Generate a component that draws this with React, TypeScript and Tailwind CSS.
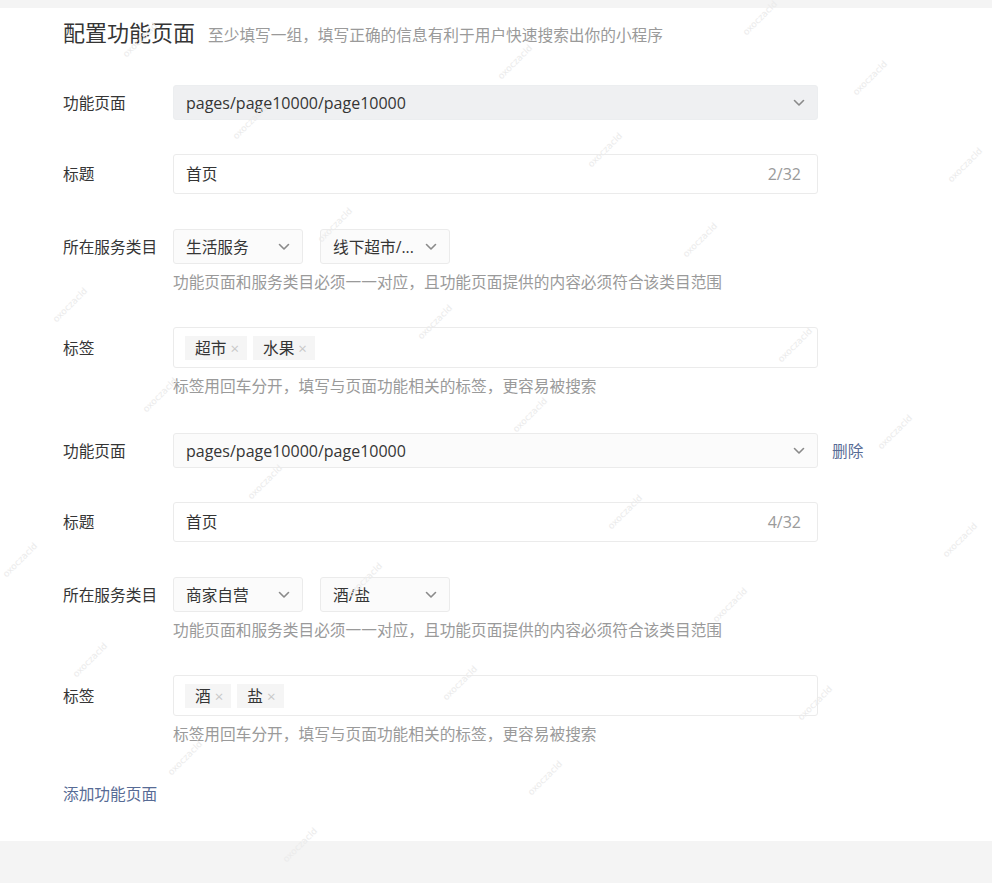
import React from "react";

const FONT = { fontFamily: '"Open Sans", "Noto Sans CJK SC", sans-serif' };

function Chevron() {
  return (
    <svg width="12" height="8" viewBox="0 0 12 8" className="shrink-0">
      <polyline points="1.5,1.5 6,6 10.5,1.5" fill="none" stroke="#8a8a8a" strokeWidth="1.6" strokeLinecap="round" strokeLinejoin="round" />
    </svg>
  );
}

function Label({ children }: { children: React.ReactNode }) {
  return <div className="w-[110px] shrink-0 text-[15.7px] leading-[20px] text-[#353535]">{children}</div>;
}

function PageSelect({ grey, del }: { grey?: boolean; del?: boolean }) {
  return (
    <div className="flex items-center">
      <Label>功能页面</Label>
      <div
        className={
          grey
            ? "flex h-[35px] w-[645px] items-center justify-between rounded-[3px] border border-[#eceef0] bg-[#eff0f2] pl-[12px] pr-[12px]"
            : "flex h-[35px] w-[645px] items-center justify-between rounded-[3px] border border-[#ebebeb] bg-[#fbfbfb] pl-[12px] pr-[12px]"
        }
      >
        <span className="text-[16px] leading-[20px] text-[#353535]">pages/page10000/page10000</span>
        <Chevron />
      </div>
      {del && <span className="ml-[14px] text-[15.7px] leading-[20px] text-[#576b95]">删除</span>}
    </div>
  );
}

function TitleInput({ count }: { count: string }) {
  return (
    <div className="flex items-center">
      <Label>标题</Label>
      <div className="flex h-[40px] w-[645px] items-center justify-between rounded-[3px] border border-[#ebebeb] bg-white pl-[12px] pr-[16px]">
        <span className="text-[15.7px] leading-[20px] text-[#353535]">首页</span>
        <span className="text-[16px] leading-[20px] text-[#9a9a9a]">{count}</span>
      </div>
    </div>
  );
}

function SmallSelect({ text }: { text: string }) {
  return (
    <div className="flex h-[35px] w-[130px] items-center justify-between rounded-[3px] border border-[#ebebeb] bg-[#fbfbfb] pl-[12px] pr-[12px]">
      <span className="text-[15.7px] leading-[20px] text-[#353535]">{text}</span>
      <Chevron />
    </div>
  );
}

function Category({ a, b }: { a: string; b: string }) {
  return (
    <div>
      <div className="flex items-center">
        <Label>所在服务类目</Label>
        <div className="flex gap-[17px]">
          <SmallSelect text={a} />
          <SmallSelect text={b} />
        </div>
      </div>
      <div className="mt-[8px] pl-[110px] text-[15.7px] leading-[20px] text-[#9a9a9a]">
        功能页面和服务类目必须一一对应，且功能页面提供的内容必须符合该类目范围
      </div>
    </div>
  );
}

function Tags({ tags }: { tags: string[] }) {
  return (
    <div>
      <div className="flex items-center">
        <Label>标签</Label>
        <div className="flex h-[41px] w-[645px] items-center gap-[6px] rounded-[3px] border border-[#ebebeb] bg-white pl-[11px]">
          {tags.map((t) => (
            <span key={t} className="flex h-[24px] items-center gap-[4px] bg-[#f5f5f5] pl-[10px] pr-[8px]">
              <span className="text-[15.7px] leading-[20px] text-[#353535]">{t}</span>
              <span className="text-[15px] leading-[16px] text-[#c8c8c8]">×</span>
            </span>
          ))}
        </div>
      </div>
      <div className="mt-[8px] pl-[110px] text-[15.7px] leading-[20px] text-[#9a9a9a]">
        标签用回车分开，填写与页面功能相关的标签，更容易被搜索
      </div>
    </div>
  );
}

const marks: [number, number][] = [
  [140, 40], [515, 62], [870, 78], [250, 122], [605, 150], [965, 165],
  [335, 225], [700, 240], [70, 305], [435, 322], [795, 345], [160, 395],
  [530, 415], [895, 432], [265, 482], [625, 512], [960, 540], [20, 560],
  [365, 580], [730, 605], [90, 660], [460, 683], [815, 703], [185, 758],
  [545, 778], [300, 845], [760, 18],
];

export default function App() {
  return (
    <div className="relative min-h-[883px] overflow-hidden bg-[#f4f4f4]" style={FONT}>
      <div className="h-[8px]" />
      <div className="bg-white pb-[37px] pl-[63px] pt-[8px]">
        <div className="flex items-baseline">
          <span className="text-[22px] leading-[32px] text-[#353535]">配置功能页面</span>
          <span className="ml-[13px] text-[15.7px] leading-[20px] text-[#9a9a9a]">
            至少填写一组，填写正确的信息有利于用户快速搜索出你的小程序
          </span>
        </div>
        <div className="mt-[37px]">
          <PageSelect grey />
        </div>
        <div className="mt-[34px]">
          <TitleInput count="2/32" />
        </div>
        <div className="mt-[35px]">
          <Category a="生活服务" b="线下超市/..." />
        </div>
        <div className="mt-[35px]">
          <Tags tags={["超市", "水果"]} />
        </div>
        <div className="mt-[37px]">
          <PageSelect del />
        </div>
        <div className="mt-[34px]">
          <TitleInput count="4/32" />
        </div>
        <div className="mt-[35px]">
          <Category a="商家自营" b="酒/盐" />
        </div>
        <div className="mt-[35px]">
          <Tags tags={["酒", "盐"]} />
        </div>
        <div className="mt-[40px] text-[15.7px] leading-[20px] text-[#576b95]">添加功能页面</div>
      </div>
      {marks.map(([x, y], i) => (
        <span
          key={i}
          className="pointer-events-none absolute -rotate-45 text-[9px] leading-[10px] text-[#ebebeb]"
          style={{ left: x - 22, top: y - 5, fontFamily: '"DejaVu Sans", sans-serif' }}
        >
          oxoczacld
        </span>
      ))}
    </div>
  );
}
